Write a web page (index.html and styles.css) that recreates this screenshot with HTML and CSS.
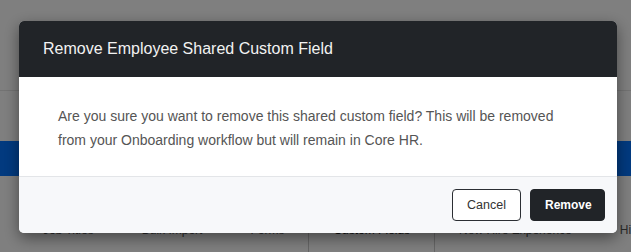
FILE: index.html
```html
<!DOCTYPE html>
<html lang="en">
<head>
<meta charset="utf-8">
<title>Remove Employee Shared Custom Field</title>
<link rel="stylesheet" href="styles.css">
</head>
<body>
<div class="page">
  <header class="topbar"></header>
  <div class="spacer"></div>
  <div class="band"></div>
  <nav class="tabs">
    <span class="tab">Job Titles</span>
    <span class="tab">Bulk Import</span>
    <span class="tab">Forms</span>
    <span class="tab tab-sep tab-active">Custom Fields</span>
    <span class="tab tab-sep">New Hire Experience</span>
    <span class="tab">Hiring</span>
  </nav>
</div>
<div class="backdrop"></div>
<div class="modal" role="dialog" aria-labelledby="modal-title">
  <div class="modal-header">
    <h2 class="modal-title" id="modal-title">Remove Employee Shared Custom Field</h2>
  </div>
  <div class="modal-body">
    <p class="modal-text">Are you sure you want to remove this shared custom field? This will be removed from your Onboarding workflow but will remain in Core HR.</p>
  </div>
  <div class="modal-footer">
    <button class="btn btn-secondary" type="button">Cancel</button>
    <button class="btn btn-primary" type="button">Remove</button>
  </div>
</div>
</body>
</html>
```

FILE: styles.css
```css
* { box-sizing: border-box; }

html, body {
  margin: 0;
  padding: 0;
  height: 100%;
  overflow: hidden;
}

body {
  font-family: "Liberation Sans", Arial, sans-serif;
  background: #ffffff;
}

.page {
  display: flex;
  flex-direction: column;
  min-height: 100%;
}

.topbar {
  height: 91px;
  border-bottom: 1px solid #e6e6e6;
  background: #ffffff;
}

.spacer {
  height: 50px;
}

.band {
  height: 35px;
  background: #0474ff;
}

.tabs {
  display: flex;
  padding-left: 19px;
  flex: 1;
  background: #ffffff;
}

.tab {
  padding: 46px 24px 0;
  font-size: 12px;
  line-height: 16px;
  color: #555555;
  white-space: nowrap;
}

.tab-sep {
  border-left: 1px solid #cccccc;
}

.tab-active {
  color: #222222;
}

.backdrop {
  position: fixed;
  inset: 0;
  background: rgba(0, 0, 0, 0.5);
}

.modal {
  position: fixed;
  left: 19px;
  top: 21px;
  width: 598px;
  display: flex;
  flex-direction: column;
  border-radius: 5px;
  overflow: hidden;
  background: #ffffff;
  box-shadow: 0 5px 15px rgba(0, 0, 0, 0.45);
}

.modal-header {
  height: 56px;
  display: flex;
  align-items: center;
  padding: 0 24px;
  background: #212428;
}

.modal-title {
  margin: 0;
  font-size: 16px;
  font-weight: normal;
  color: #f2f2f2;
  line-height: 20px;
}

.modal-body {
  padding: 27px 40px 24px 39px;
  background: #ffffff;
}

.modal-text {
  margin: 0;
  font-size: 14px;
  line-height: 24px;
  color: #555555;
}

.modal-footer {
  display: flex;
  justify-content: flex-end;
  gap: 9px;
  padding: 12px 12px 12px;
  background: #f7f8fa;
  border-top: 1px solid #e3e5e8;
}

.btn {
  height: 32px;
  padding: 0 14px;
  border-radius: 4px;
  font-family: "Liberation Sans", Arial, sans-serif;
  font-size: 12.5px;
  line-height: 30px;
  cursor: pointer;
}

.btn-secondary {
  width: 69px;
  background: #ffffff;
  border: 1px solid #2b2e33;
  color: #333333;
}

.btn-primary {
  width: 75px;
  background: #212428;
  border: 1px solid #212428;
  color: #ffffff;
  font-weight: bold;
  font-size: 12px;
}
```
